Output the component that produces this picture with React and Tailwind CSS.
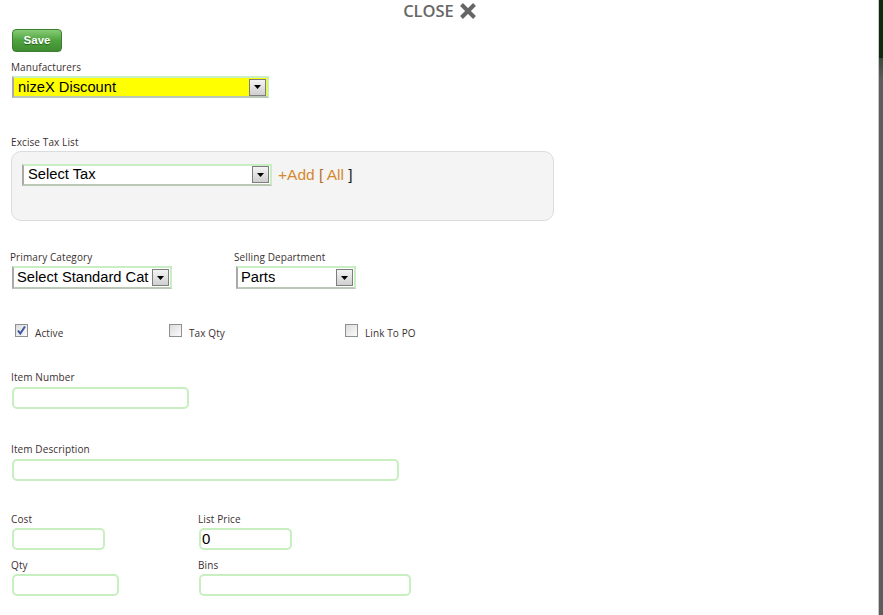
import React from "react";

const label = "block h-[13px] leading-[15px] text-[10px] tracking-[0.1px] text-[#3b2f30] [font-family:'Open_Sans',sans-serif]";

function Arrow() {
  return (
    <div className="shrink-0 mr-[1px] w-[17px] h-[17px] border border-[#7d7d7d] bg-gradient-to-b from-[#f4f4f4] to-[#cfcfcf] flex items-center justify-center">
      <svg width="7" height="4" viewBox="0 0 7 4"><path d="M0 0H7L3.5 4Z" fill="#000" /></svg>
    </div>
  );
}

function Select({ w, h = 22, bg = "bg-white", text }) {
  return (
    <div
      className={`${bg} border-2 border-[#c8eec4] border-l-[#a9a9a9] border-b-[#b9c9b6] flex items-center`}
      style={{ width: w, height: h }}
    >
      <span className="flex-1 min-w-0 pl-[2px] text-[14.7px] leading-none text-black whitespace-nowrap overflow-hidden [font-family:'Liberation_Sans',Arial,sans-serif]">{text}</span>
      <Arrow />
    </div>
  );
}

function Input({ w, value }) {
  return (
    <div
      className="h-[22px] border-2 border-[#c7efbf] rounded-[5px] bg-white flex items-center pl-[1px] text-[15px] text-black [font-family:'Liberation_Sans',Arial,sans-serif]"
      style={{ width: w }}
    >
      {value}
    </div>
  );
}

function Checkbox({ checked }) {
  return (
    <div className="w-[13px] h-[13px] border border-[#8e8f8f] bg-gradient-to-br from-[#dcdcdc] to-[#fbfbfb] flex items-center justify-center">
      {checked && (
        <svg width="11" height="11" viewBox="0 0 11 11">
          <path d="M2 5.5L4.3 8.5L9 1.5" fill="none" stroke="#3a57a0" strokeWidth="2" />
        </svg>
      )}
    </div>
  );
}

const cbLabel = "ml-[7px] mt-[3px] text-[10px] leading-[13px] tracking-[0.1px] text-[#3b2f30] [font-family:'Open_Sans',sans-serif]";

export default function App() {
  return (
    <div className="w-[883px] h-[615px] flex overflow-hidden bg-white">
      <div className="flex-1 flex flex-col">
        <div className="h-[22px] flex justify-center items-start pl-[2px] pt-[1px]">
          <div className="flex items-center gap-[5px]">
            <span className="text-[16.5px] leading-[20px] font-semibold text-[#676767] [font-family:'Open_Sans',sans-serif]">CLOSE</span>
            <svg width="18" height="18" viewBox="0 0 18 18">
              <path d="M2.5 2.5L15.5 15.5M15.5 2.5L2.5 15.5" stroke="#666" strokeWidth="4" />
            </svg>
          </div>
        </div>

        <div className="pl-[12px] mt-[7px]">
          <div className="w-[50px] h-[23px] rounded-[4px] border border-[#3d7d30] bg-gradient-to-b from-[#86cc74] via-[#4fa33f] to-[#3e8c31] flex items-center justify-center">
            <span className="text-[11.5px] font-bold text-white [text-shadow:0_1px_1px_rgba(0,60,0,0.6)] [font-family:'Liberation_Sans',Arial,sans-serif]">Save</span>
          </div>
        </div>

        <div className="pl-[11px] mt-[8px]">
          <span className={label}>Manufacturers</span>
        </div>
        <div className="pl-[12px] mt-[3px]">
          <Select w={257} bg="bg-[#ffff00]" text={<span className="pl-[2px]">nizeX Discount</span>} />
        </div>

        <div className="pl-[11px] mt-[37px]">
          <span className={label}>Excise Tax List</span>
        </div>
        <div className="ml-[11px] mt-[3px] w-[543px] h-[70px] rounded-[10px] border border-[#d9dde0] bg-[#f4f4f4] pl-[10px] pt-[11px]">
          <div className="flex items-center">
            <Select w={250} h={22} text={<span className="pl-[2px]">Select Tax</span>} />
            <span className="ml-[6px] text-[15.5px] [font-family:'Liberation_Sans',Arial,sans-serif] whitespace-pre">
              <span className="text-[#d4892f]">+Add </span>
              <span className="text-[#b5701f]">[ </span>
              <span className="text-[#d4892f]">All</span>
              <span className="text-[#222]"> ]</span>
            </span>
          </div>
        </div>

        <div className="flex mt-[29px]">
          <div className="pl-[10px] w-[234px]">
            <span className={label}>Primary Category</span>
            <div className="pl-[2px] mt-[3px]">
              <Select w={160} h={23} text={<span className="pl-[1px]">Select Standard Cat</span>} />
            </div>
          </div>
          <div>
            <span className={label}>Selling Department</span>
            <div className="pl-[2px] mt-[3px]">
              <Select w={120} h={23} text={<span className="pl-[1px]">Parts</span>} />
            </div>
          </div>
        </div>

        <div className="flex mt-[35px] h-[14px] items-start">
          <div className="w-[169px] pl-[15px] flex items-start">
            <Checkbox checked />
            <span className={cbLabel}>Active</span>
          </div>
          <div className="w-[176px] flex items-start">
            <Checkbox />
            <span className={cbLabel}>Tax Qty</span>
          </div>
          <div className="flex items-start">
            <Checkbox />
            <span className={cbLabel}>Link To PO</span>
          </div>
        </div>

        <div className="pl-[11px] mt-[32px]">
          <span className={label}>Item Number</span>
        </div>
        <div className="pl-[12px] mt-[4px]">
          <Input w={177} />
        </div>

        <div className="pl-[11px] mt-[33px]">
          <span className={label}>Item Description</span>
        </div>
        <div className="pl-[12px] mt-[4px]">
          <Input w={387} />
        </div>

        <div className="flex mt-[31px]">
          <div className="w-[198px] pl-[11px]">
            <span className={label}>Cost</span>
            <div className="pl-[1px] mt-[3px]"><Input w={93} /></div>
            <span className={`${label} mt-[8px]`}>Qty</span>
            <div className="pl-[1px] mt-[3px]"><Input w={107} /></div>
          </div>
          <div>
            <span className={label}>List Price</span>
            <div className="pl-[1px] mt-[3px]"><Input w={93} value="0" /></div>
            <span className={`${label} mt-[8px]`}>Bins</span>
            <div className="pl-[1px] mt-[3px]"><Input w={212} /></div>
          </div>
        </div>
      </div>
      <div className="w-[1px] h-full bg-[#c8c8c8]" />
      <div className="w-[4px] h-full flex flex-col">
        <div className="h-[58px] bg-[#0d2a10]" />
        <div className="h-[22px] bg-gradient-to-b from-[#3a4a3a] to-[#5c5c5c]" />
        <div className="flex-1 bg-[#5c5c5c]" />
      </div>
    </div>
  );
}
